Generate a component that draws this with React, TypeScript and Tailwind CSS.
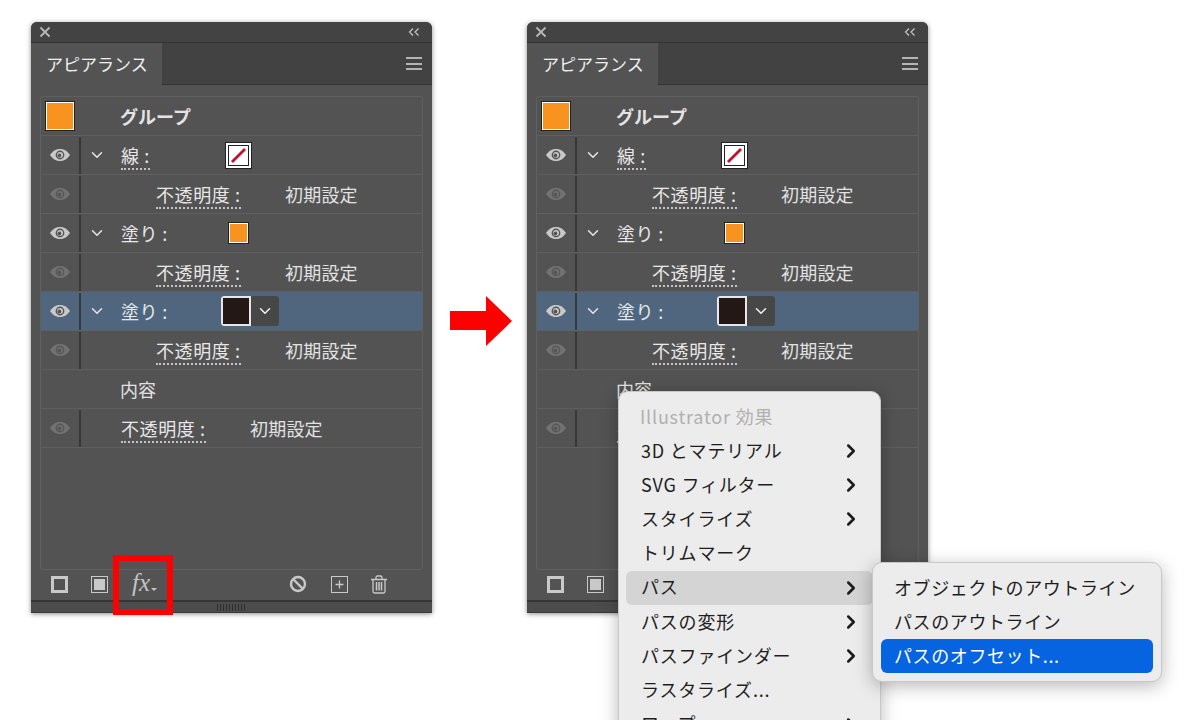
import { ChevronDown, ChevronRight } from 'lucide-react';

const jp = '[font-family:"Noto_Sans_CJK_JP","Noto_Sans",sans-serif]';

function Eye({ dim }: { dim?: boolean }) {
  const c = dim ? '#727272' : '#c9c9c9';
  const d = dim ? '#565656' : '#555555';
  return (
    <svg width="20" height="14" viewBox="0 0 20 14">
      <path d="M0 7C3 2.500 6.500 1 10 1s7 1.500 10 6c-3 4.500-6.500 6-10 6S3 11.500 0 7Z" fill={c} />
      <circle cx="10" cy="7" r="4.400" fill={d} />
      <circle cx="10" cy="7" r="3" fill={c} />
      <circle cx="9.400" cy="7.500" r="1.900" fill={d} />
    </svg>
  );
}

function Label({ text, under }: { text: string; under?: boolean }) {
  if (!under) return <span>{text}</span>;
  return <span className="border-b-2 border-dotted border-[#c4c4c4] leading-[23px] tracking-[0.6px]">{text}</span>;
}

function EyeCol({ dim, none }: { dim?: boolean; none?: boolean }) {
  return (
    <>
      <div className="flex w-[38px] shrink-0 justify-center">{!none && <Eye dim={dim} />}</div>
      <div className={`h-[37px] w-[2px] shrink-0 ${none ? '' : 'bg-[#383838]'}`} />
    </>
  );
}

function Arrow() {
  return <ChevronDown size={18} strokeWidth={2} className="ml-[7px] mr-[15px] shrink-0 text-[#e6e6e6]" />;
}

function FillRow({ label, swatch, selected }: { label: string; swatch: React.ReactNode; selected?: boolean }) {
  return (
    <div className={`flex h-[39px] items-center border-b border-[#5f5f5f] ${selected ? 'bg-[#50667e]' : ''}`}>
      <EyeCol />
      <Arrow />
      {label === '線 :' ? (
        <div className="w-[104px] shrink-0"><Label text={label} under /></div>
      ) : (
        <div className="w-[100px] shrink-0 tracking-[0.4px]"><Label text={label} /></div>
      )}
      {swatch}
    </div>
  );
}

function OpacityRow({ indent }: { indent?: boolean }) {
  return (
    <div className="flex h-[39px] items-center border-b border-[#5f5f5f]">
      <EyeCol dim />
      <div className={`shrink-0 ${indent ? 'w-[75px]' : 'w-[40px]'}`} />
      <div className="w-[129px] shrink-0"><Label text="不透明度 :" under /></div>
      <span className="tracking-[0.2px] text-[#e2e2e2]">初期設定</span>
    </div>
  );
}

function Panel() {
  return (
    <div className={`${jp} relative flex h-[591px] w-[401px] shrink-0 flex-col overflow-hidden rounded-t-[6px] bg-[#535353] text-[18px] text-[#e8e8e8] shadow-[0_1px_5px_rgba(0,0,0,0.45)]`}>
      {/* title bar */}
      <div className="flex h-[21px] shrink-0 items-center justify-between border-b border-[#333333] bg-[#434343] pl-[8px] pr-[12px]">
        <svg width="12" height="12" viewBox="0 0 12 12"><path d="M1.500 1.500l9 9M10.500 1.500l-9 9" stroke="#b8b8b8" strokeWidth="1.800" /></svg>
        <svg width="12" height="8" viewBox="0 0 12 8"><path d="M5 .5 1.500 4 5 7.500M10.500 .5 7 4l3.500 3.500" stroke="#c8c8c8" strokeWidth="1.200" fill="none" /></svg>
      </div>
      {/* tab row */}
      <div className="flex h-[42px] shrink-0 bg-[#424242]">
        <div className="flex w-[131px] items-center bg-[#535353] pl-[15px] text-[17px] text-[#efefef]">アピアランス</div>
        <div className="flex flex-1 items-center justify-end border-b border-[#333333] pr-[10px]">
          <div className="flex w-[16px] flex-col gap-[3.500px]">
            <div className="h-[2px] bg-[#b4b4b4]" />
            <div className="h-[2px] bg-[#b4b4b4]" />
            <div className="h-[2px] bg-[#b4b4b4]" />
          </div>
        </div>
      </div>
      {/* list */}
      <div className="mx-[9px] mt-[11px] flex h-[474px] flex-col rounded-[2px] border border-[#606060]">
        <div className="flex h-[39px] items-center border-b border-[#5f5f5f] pl-[4px]">
          <div className="h-[30px] w-[30px] shrink-0 border border-[#222222] bg-white p-[1px]">
            <div className="h-full w-full bg-[#f7931e]" />
          </div>
          <span className="ml-[45px] font-bold text-[#e4e4e4]">グループ</span>
        </div>
        <FillRow
          label="線 :"
          swatch={
            <div className="h-[27px] w-[27px] border border-[#222222] bg-white p-[2px]">
              <div className="h-full w-full border border-[#222222] bg-white">
                <svg viewBox="0 0 19 19" className="h-full w-full"><path d="M3 16 16 3" stroke="#c8102e" strokeWidth="2.800" /></svg>
              </div>
            </div>
          }
        />
        <OpacityRow indent />
        <FillRow
          label="塗り :"
          swatch={
            <div className="ml-[7px] h-[22px] w-[21px] border border-[#222222] bg-white p-[1px]">
              <div className="h-full w-full bg-[#f7931e]" />
            </div>
          }
        />
        <OpacityRow indent />
        <FillRow
          label="塗り :"
          selected
          swatch={
            <div className="flex h-[30px] w-[58px] items-center overflow-hidden rounded-[3px] bg-[#474747]">
              <div className="h-[30px] w-[30px] shrink-0 border-2 border-[#e6e6e6] bg-[#231815]" />
              <ChevronDown size={18} strokeWidth={2} className="ml-[5px] text-[#f0f0f0]" />
            </div>
          }
        />
        <OpacityRow indent />
        <div className="flex h-[39px] items-center border-b border-[#5f5f5f] pl-[79px] text-[#e2e2e2]">内容</div>
        <OpacityRow />
      </div>
      {/* footer */}
      <div className="relative flex h-[30px] shrink-0 items-center pb-[2px] pl-[20px]">
        <div className="h-[17px] w-[17px] border-[3.500px] border-[#c9c9c9]" />
        <div className="ml-[23px] flex h-[17px] w-[17px] items-center justify-center border border-[#c9c9c9] p-[2px]">
          <div className="h-full w-full bg-[#c9c9c9]" />
        </div>
        <div className="mb-[3px] ml-[24px] flex w-[24px] items-baseline">
          <span className="[font-family:'Liberation_Serif',serif] text-[25px] italic leading-none text-[#c4c4c4]">fx</span>
          <span className="ml-[1px] h-0 w-0 border-x-[3px] border-t-[3px] border-x-transparent border-t-[#c4c4c4]" />
        </div>
        <div className="ml-[133px]">
          <svg width="18" height="18" viewBox="0 0 18 18" className="block"><circle cx="9" cy="9" r="7" fill="none" stroke="#c9c9c9" strokeWidth="2.400" /><path d="M4 4l10 10" stroke="#c9c9c9" strokeWidth="2.400" /></svg>
        </div>
        <div className="ml-[24px] flex h-[17px] w-[17px] items-center justify-center border border-[#c9c9c9]">
          <svg width="9" height="9" viewBox="0 0 9 9" className="block"><path d="M4.500 0.500v8M0.500 4.500h8" stroke="#c9c9c9" strokeWidth="1.300" /></svg>
        </div>
        <div className="ml-[22px]">
          <svg width="18" height="19" viewBox="0 0 18 19" className="block" fill="none" stroke="#c9c9c9">
            <path d="M1 4.500h16M6 4.500V2.500q0-1.500 1.500-1.500h3q1.500 0 1.500 1.500v2" strokeWidth="1.300" />
            <path d="M3 4.500v12q0 1.500 1.500 1.500h9q1.500 0 1.500-1.500v-12" strokeWidth="1.300" />
            <path d="M6.500 7v8.500M9 7v8.500M11.500 7v8.500" strokeWidth="1.500" />
          </svg>
        </div>
      </div>
      {/* resize strip */}
      <div className="flex h-[13px] shrink-0 items-start justify-center border-b border-[#3a3a3a] border-t-2 border-t-[#363636] bg-[#4c4c4c]">
        <div className="mt-[2px] h-[7px] w-[30px] bg-[repeating-linear-gradient(90deg,#2e2e2e_0,#2e2e2e_1px,transparent_1px,transparent_3px)]" />
      </div>
    </div>
  );
}

function MenuItem({ text, arrow, hover }: { text: string; arrow?: boolean; hover?: boolean }) {
  return (
    <div className={`mx-[7px] flex h-[34.200px] shrink-0 items-center justify-between rounded-[6px] pb-[2px] pl-[15px] pr-[11px] ${hover ? 'bg-[#d4d4d4]' : ''}`}>
      <span>{text}</span>
      {arrow && <ChevronRight size={22} strokeWidth={2.800} className="mt-[2px] text-[#1c1c1c]" />}
    </div>
  );
}

export default function App() {
  return (
    <div className="relative h-[720px] w-[1200px] overflow-hidden bg-white">
      <div className="flex items-start pl-[31px] pt-[22px]">
        <Panel />
        <div className="ml-[18px] mt-[274px] w-[62px] shrink-0">
          <svg width="62" height="50" viewBox="0 0 62 50" className="block"><path d="M0 15h36V0l26 25-26 25V34H0Z" fill="#ff0000" /></svg>
        </div>
        <div className="ml-[15px]"><Panel /></div>
      </div>

      {/* fx highlight */}
      <div className="absolute left-[113px] top-[555px] h-[60px] w-[60px] border-[6px] border-[#ff0000]" />

      {/* effect menu */}
      <div className={`${jp} absolute left-[618px] top-[391px] flex h-[360px] w-[263px] flex-col rounded-[10px] border border-[#c8c8c8] bg-[#ececec] pt-[8px] text-[18px] tracking-[0.8px] text-[#1e1e1e] shadow-[0_4px_18px_rgba(0,0,0,0.28)]`}>
        <div className="flex h-[34px] shrink-0 items-center pb-[2px] pl-[21px] text-[#b0b0b0]">Illustrator 効果</div>
        <MenuItem text="3D とマテリアル" arrow />
        <MenuItem text="SVG フィルター" arrow />
        <MenuItem text="スタイライズ" arrow />
        <MenuItem text="トリムマーク" />
        <MenuItem text="パス" arrow hover />
        <MenuItem text="パスの変形" arrow />
        <MenuItem text="パスファインダー" arrow />
        <MenuItem text="ラスタライズ..." />
        <MenuItem text="ワープ" arrow />
      </div>

      {/* path submenu */}
      <div className={`${jp} absolute left-[872px] top-[562px] flex h-[120px] w-[290px] flex-col rounded-[10px] border border-[#c8c8c8] bg-[#ececec] pt-[8px] text-[18px] tracking-[0.6px] text-[#1e1e1e] shadow-[0_4px_18px_rgba(0,0,0,0.28)]`}>
        <div className="flex h-[34px] items-center pb-[2px] pl-[21px]">オブジェクトのアウトライン</div>
        <div className="flex h-[34px] items-center pb-[2px] pl-[21px]">パスのアウトライン</div>
        <div className="mx-[8px] flex h-[34px] items-center rounded-[6px] bg-[#0764e0] pb-[2px] pl-[13px] text-white">パスのオフセット...</div>
      </div>
    </div>
  );
}
